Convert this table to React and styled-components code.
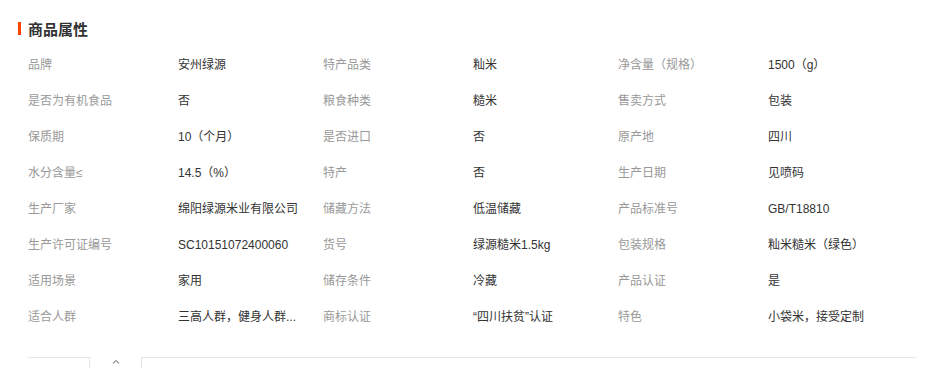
import React from "react";
import styled, { createGlobalStyle } from "styled-components";

const Global = createGlobalStyle`
  html, body { margin: 0; padding: 0; background: #fff; }
  body { font-family: "Liberation Sans", "Noto Sans CJK SC", sans-serif; }
`;

const Page = styled.div`
  width: 938px;
  height: 368px;
  overflow: hidden;
  padding: 19px 22px 0 18px;
  box-sizing: border-box;
`;

const Title = styled.h2`
  margin: 0;
  display: flex;
  align-items: center;
  gap: 7px;
  height: 18px;
  font-size: 15px;
  font-weight: bold;
  color: #333;
  font-family: "Liberation Sans", "Noto Sans CJK SC", sans-serif;
`;

const Bar = styled.span`
  width: 3px;
  height: 13px;
  background: #ff4400;
`;

const Grid = styled.div`
  margin-top: 10px;
  padding-left: 10px;
  display: grid;
  grid-template-columns: repeat(3, 150px 145px);
`;

const Cell = styled.div`
  height: 36px;
  line-height: 36px;
  font-size: 12px;
  color: ${(p) => (p.$label ? "#999" : "#333")};
  white-space: nowrap;
`;

const Footer = styled.div`
  margin-top: 22px;
  margin-left: 10px;
  display: flex;
  align-items: flex-start;
  height: 20px;
`;

const TabBox = styled.div`
  width: 62px;
  height: 20px;
  border-top: 1px solid #e5e5e5;
  border-right: 1px solid #e5e5e5;
  box-sizing: border-box;
`;

const Toggle = styled.div`
  width: 51px;
  display: flex;
  justify-content: center;
  padding-top: 2px;
`;

const Rest = styled.div`
  flex: 1;
  height: 20px;
  border-top: 1px solid #e5e5e5;
  border-left: 1px solid #e5e5e5;
  box-sizing: border-box;
`;

const rows = [
  ["品牌", "安州绿源", "特产品类", "籼米", "净含量（规格）", "1500（g）"],
  ["是否为有机食品", "否", "粮食种类", "糙米", "售卖方式", "包装"],
  ["保质期", "10（个月）", "是否进口", "否", "原产地", "四川"],
  ["水分含量≤", "14.5（%）", "特产", "否", "生产日期", "见喷码"],
  ["生产厂家", "绵阳绿源米业有限公司", "储藏方法", "低温储藏", "产品标准号", "GB/T18810"],
  ["生产许可证编号", "SC10151072400060", "货号", "绿源糙米1.5kg", "包装规格", "籼米糙米（绿色）"],
  ["适用场景", "家用", "储存条件", "冷藏", "产品认证", "是"],
  ["适合人群", "三高人群，健身人群...", "商标认证", "“四川扶贫”认证", "特色", "小袋米，接受定制"],
];

export default function App() {
  return (
    <>
      <Global />
      <Page>
        <Title>
          <Bar />
          商品属性
        </Title>
        <Grid>
          {rows.map((r, i) =>
            r.map((t, j) => (
              <Cell key={`${i}-${j}`} $label={j % 2 === 0}>
                {t}
              </Cell>
            ))
          )}
        </Grid>
        <Footer>
          <TabBox />
          <Toggle>
            <svg width="8" height="5" viewBox="0 0 8 5">
              <path d="M1 4.5 L4 1.5 L7 4.5" fill="none" stroke="#999" strokeWidth="1.2" />
            </svg>
          </Toggle>
          <Rest />
        </Footer>
      </Page>
    </>
  );
}
